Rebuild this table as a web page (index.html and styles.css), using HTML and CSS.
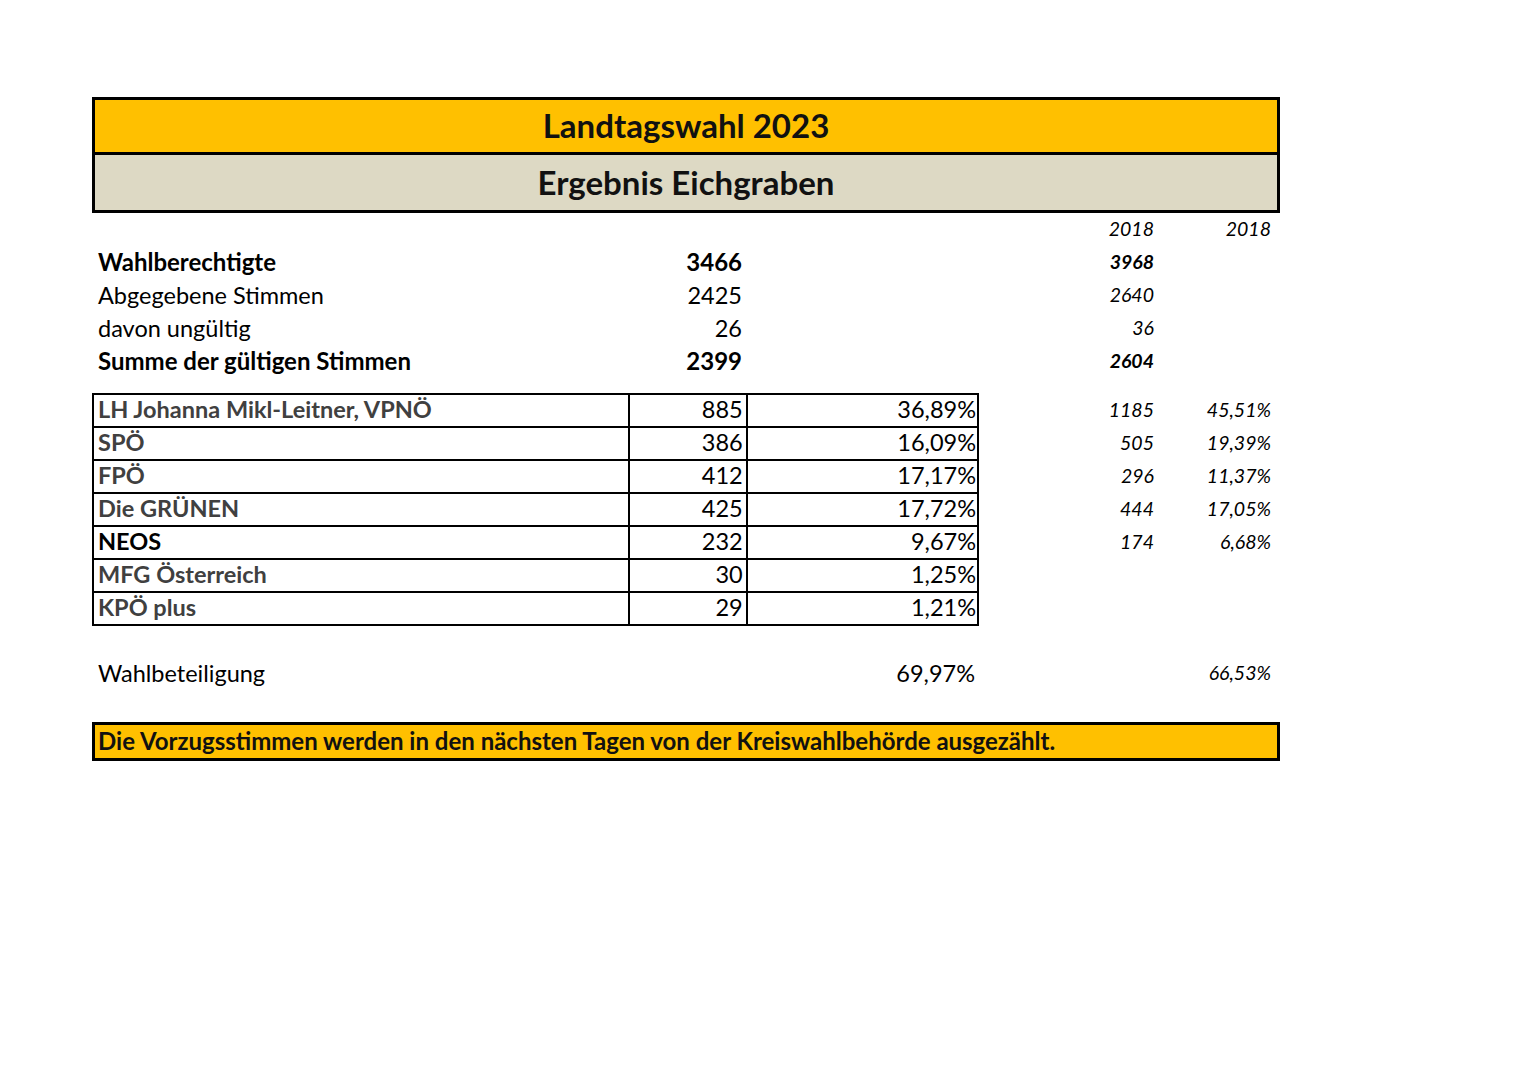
FILE: index.html
```html
<!DOCTYPE html>
<html lang="de">
<head>
<meta charset="utf-8">
<title>Landtagswahl 2023 – Ergebnis Eichgraben</title>
<link rel="stylesheet" href="styles.css">
</head>
<body>
<div class="sheet">
  <div class="title-box">
    <div class="title-row">Landtagswahl 2023</div>
    <div class="subtitle-row">Ergebnis Eichgraben</div>
  </div>

  <div class="grid stats">
    <div class="row">
      <span class="c-name"></span><span class="c-val"></span><span class="c-pct"></span>
      <span class="c-y1 it">2018</span><span class="c-y2 it">2018</span>
    </div>
    <div class="row bold">
      <span class="c-name">Wahlberechtigte</span><span class="c-val">3466</span><span class="c-pct"></span>
      <span class="c-y1 it">3968</span><span class="c-y2"></span>
    </div>
    <div class="row">
      <span class="c-name">Abgegebene Stimmen</span><span class="c-val">2425</span><span class="c-pct"></span>
      <span class="c-y1 it">2640</span><span class="c-y2"></span>
    </div>
    <div class="row">
      <span class="c-name">davon ungültig</span><span class="c-val">26</span><span class="c-pct"></span>
      <span class="c-y1 it">36</span><span class="c-y2"></span>
    </div>
    <div class="row bold">
      <span class="c-name">Summe der gültigen Stimmen</span><span class="c-val">2399</span><span class="c-pct"></span>
      <span class="c-y1 it">2604</span><span class="c-y2"></span>
    </div>
  </div>

  <div class="party-wrap">
    <table class="parties">
      <tbody>
        <tr><td class="p-name">LH Johanna Mikl-Leitner, VPNÖ</td><td class="p-val">885</td><td class="p-pct">36,89%</td></tr>
        <tr><td class="p-name">SPÖ</td><td class="p-val">386</td><td class="p-pct">16,09%</td></tr>
        <tr><td class="p-name">FPÖ</td><td class="p-val">412</td><td class="p-pct">17,17%</td></tr>
        <tr><td class="p-name">Die GRÜNEN</td><td class="p-val">425</td><td class="p-pct">17,72%</td></tr>
        <tr><td class="p-name black">NEOS</td><td class="p-val">232</td><td class="p-pct">9,67%</td></tr>
        <tr><td class="p-name">MFG Österreich</td><td class="p-val">30</td><td class="p-pct">1,25%</td></tr>
        <tr><td class="p-name">KPÖ plus</td><td class="p-val">29</td><td class="p-pct">1,21%</td></tr>
      </tbody>
    </table>
    <div class="prev">
      <div class="prev-row"><span class="it">1185</span><span class="it">45,51%</span></div>
      <div class="prev-row"><span class="it">505</span><span class="it">19,39%</span></div>
      <div class="prev-row"><span class="it">296</span><span class="it">11,37%</span></div>
      <div class="prev-row"><span class="it">444</span><span class="it">17,05%</span></div>
      <div class="prev-row"><span class="it">174</span><span class="it">6,68%</span></div>
    </div>
  </div>

  <div class="grid turnout">
    <div class="row">
      <span class="c-name">Wahlbeteiligung</span><span class="c-val"></span><span class="c-pct">69,97%</span>
      <span class="c-y1"></span><span class="c-y2 it">66,53%</span>
    </div>
  </div>

  <div class="notice">Die Vorzugsstimmen werden in den nächsten Tagen von der Kreiswahlbehörde ausgezählt.</div>
</div>
</body>
</html>
```

FILE: styles.css
```css
* { box-sizing: border-box; }

html, body {
  margin: 0;
  padding: 0;
  background: #fff;
}

body {
  font-family: "Lato", "Liberation Sans", sans-serif;
  color: #000;
  width: 1527px;
  height: 1080px;
}

.sheet {
  padding: 97px 0 0 92px;
  width: 1280px;
}

.title-box {
  width: 1188px;
  border: 3px solid #000;
}

.title-row,
.subtitle-row {
  display: flex;
  align-items: center;
  justify-content: center;
  font-weight: 700;
  font-size: 33px;
  color: #111;
  padding-bottom: 2px;
}

.title-row {
  background: #ffc000;
  border-bottom: 3px solid #000;
  height: 55px;
}

.subtitle-row {
  background: #ddd9c4;
  height: 55px;
}

.grid .row {
  display: grid;
  grid-template-columns: 537px 118px 232px 175px 117px;
  height: 33px;
  align-items: center;
  font-size: 23.5px;
  padding-bottom: 2px;
}

.grid .row span {
  text-align: right;
  padding-right: 5px;
  white-space: nowrap;
}

.grid .row .c-name {
  text-align: left;
  padding-left: 6px;
}

.grid .row .c-pct { padding-right: 4px; }
.grid .row .c-y1,
.grid .row .c-y2 { padding-right: 0; }

.bold { font-weight: 700; }
.grid .row.bold { font-size: 24px; }

.it {
  font-style: italic;
  font-size: 19.5px;
}

.grid .row .it { font-size: 19.5px; }

.stats { margin-bottom: 15px; }

.party-wrap {
  display: flex;
  align-items: flex-start;
}

.parties {
  border-collapse: collapse;
  border: 2px solid #000;
  width: 887px;
  font-size: 23.5px;
}

.parties td {
  border: 2px solid #000;
  height: 33px;
  padding: 0 3px 2px 4px;
  line-height: 1;
  white-space: nowrap;
}

.parties .p-name {
  width: 537px;
  font-weight: 700;
  font-size: 23.5px;
  color: #404040;
  text-align: left;
  padding-left: 4px;
}

.parties .p-name.black { color: #000; }

.parties .p-val {
  width: 118px;
  text-align: right;
}

.parties .p-pct {
  width: 232px;
  text-align: right;
  padding-right: 1px;
}

.prev {
  display: flex;
  flex-direction: column;
}

.prev-row {
  display: grid;
  grid-template-columns: 175px 117px;
  height: 33px;
  align-items: center;
}

.prev-row span { text-align: right; }

.turnout { margin-top: 31px; }

.notice {
  margin-top: 32px;
  width: 1188px;
  height: 39px;
  border: 3px solid #000;
  background: #ffc000;
  font-weight: 700;
  font-size: 24px;
  display: flex;
  align-items: center;
  padding-left: 3px;
  padding-bottom: 2px;
  color: #111;
}
```
